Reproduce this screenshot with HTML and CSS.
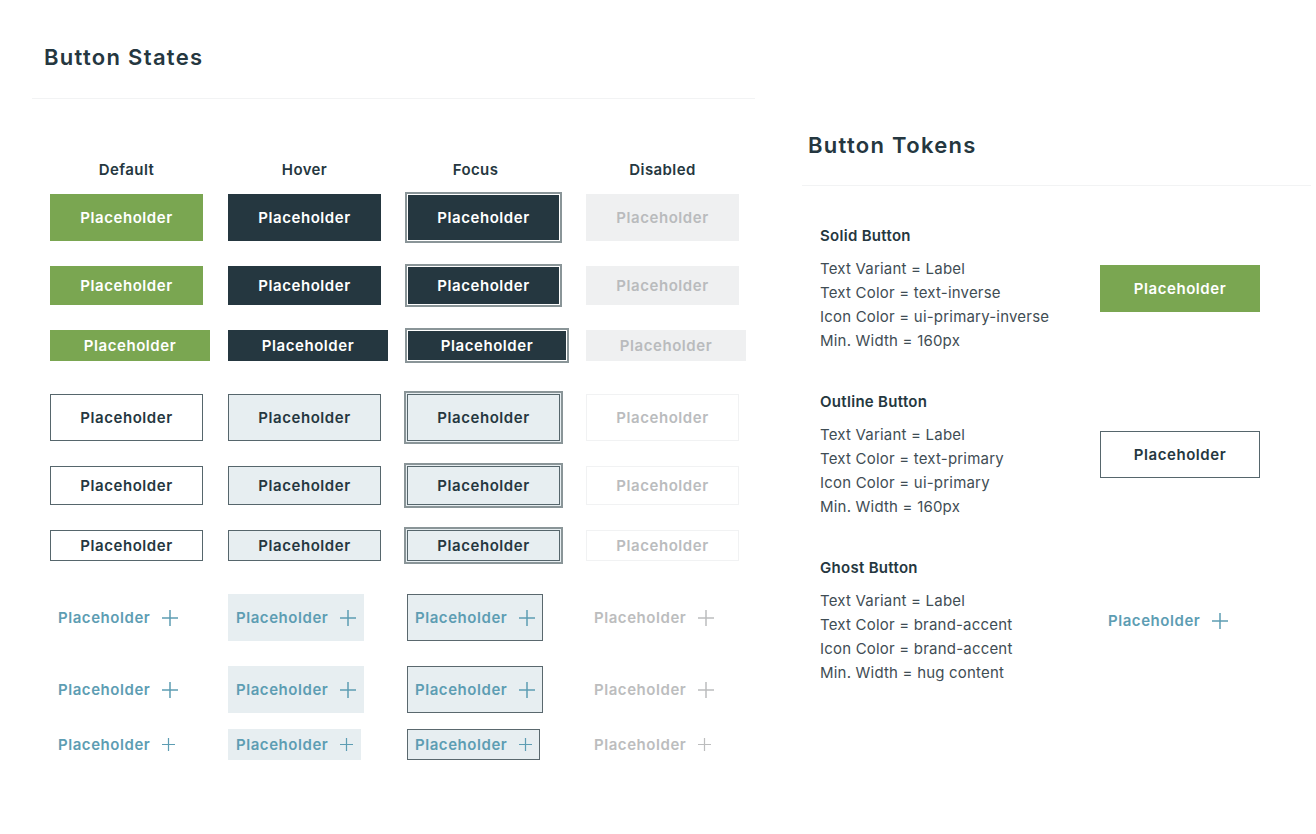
FILE: index.html
```html
<!DOCTYPE html>
<html lang="en">
<head>
    <meta charset="UTF-8">
    <meta name="viewport" content="width=device-width, initial-scale=1.0">
    <title>Buttons</title>
    <link rel="stylesheet" href="styles.css">
</head>
<body>
<div class="page">

    <!-- left: states matrix -->
    <section class="states">
        <div class="section-head">
            <h1>Button States</h1>
        </div>

        <div class="matrix">
            <div class="row heads">
                <div class="col-head">Default</div>
                <div class="col-head">Hover</div>
                <div class="col-head focus-head">Focus</div>
                <div class="col-head">Disabled</div>
            </div>

            <!-- solid -->
            <div class="row first">
                <div><span class="btn solid lg">Placeholder</span></div>
                <div><span class="btn solid hover lg">Placeholder</span></div>
                <div><span class="btn solid focus lg">Placeholder</span></div>
                <div><span class="btn solid disabled lg">Placeholder</span></div>
            </div>
            <div class="row">
                <div><span class="btn solid md">Placeholder</span></div>
                <div><span class="btn solid hover md">Placeholder</span></div>
                <div><span class="btn solid focus md">Placeholder</span></div>
                <div><span class="btn solid disabled md">Placeholder</span></div>
            </div>
            <div class="row">
                <div><span class="btn solid sm wide">Placeholder</span></div>
                <div><span class="btn solid hover sm wide">Placeholder</span></div>
                <div><span class="btn solid focus sm wide">Placeholder</span></div>
                <div><span class="btn solid disabled sm wide">Placeholder</span></div>
            </div>

            <!-- outline -->
            <div class="row group">
                <div><span class="btn outline lg">Placeholder</span></div>
                <div><span class="btn outline hover lg">Placeholder</span></div>
                <div><span class="btn outline focus lg">Placeholder</span></div>
                <div><span class="btn outline disabled lg">Placeholder</span></div>
            </div>
            <div class="row">
                <div><span class="btn outline md">Placeholder</span></div>
                <div><span class="btn outline hover md">Placeholder</span></div>
                <div><span class="btn outline focus md">Placeholder</span></div>
                <div><span class="btn outline disabled md">Placeholder</span></div>
            </div>
            <div class="row">
                <div><span class="btn outline sm">Placeholder</span></div>
                <div><span class="btn outline hover sm">Placeholder</span></div>
                <div><span class="btn outline focus sm">Placeholder</span></div>
                <div><span class="btn outline disabled sm">Placeholder</span></div>
            </div>

            <!-- ghost -->
            <div class="row group">
                <div><span class="btn ghost lg">Placeholder<svg class="plus" viewBox="0 0 16 16"><path d="M8 0v16M0 8h16"/></svg></span></div>
                <div><span class="btn ghost hover lg">Placeholder<svg class="plus" viewBox="0 0 16 16"><path d="M8 0v16M0 8h16"/></svg></span></div>
                <div><span class="btn ghost focus lg">Placeholder<svg class="plus" viewBox="0 0 16 16"><path d="M8 0v16M0 8h16"/></svg></span></div>
                <div><span class="btn ghost disabled lg">Placeholder<svg class="plus" viewBox="0 0 16 16"><path d="M8 0v16M0 8h16"/></svg></span></div>
            </div>
            <div class="row">
                <div><span class="btn ghost md">Placeholder<svg class="plus" viewBox="0 0 16 16"><path d="M8 0v16M0 8h16"/></svg></span></div>
                <div><span class="btn ghost hover lg">Placeholder<svg class="plus" viewBox="0 0 16 16"><path d="M8 0v16M0 8h16"/></svg></span></div>
                <div><span class="btn ghost focus lg">Placeholder<svg class="plus" viewBox="0 0 16 16"><path d="M8 0v16M0 8h16"/></svg></span></div>
                <div><span class="btn ghost disabled md">Placeholder<svg class="plus" viewBox="0 0 16 16"><path d="M8 0v16M0 8h16"/></svg></span></div>
            </div>
            <div class="row last">
                <div><span class="btn ghost sm">Placeholder<svg class="plus small" viewBox="0 0 16 16"><path d="M8 0v16M0 8h16"/></svg></span></div>
                <div><span class="btn ghost hover sm">Placeholder<svg class="plus small" viewBox="0 0 16 16"><path d="M8 0v16M0 8h16"/></svg></span></div>
                <div><span class="btn ghost focus sm">Placeholder<svg class="plus small" viewBox="0 0 16 16"><path d="M8 0v16M0 8h16"/></svg></span></div>
                <div><span class="btn ghost disabled sm">Placeholder<svg class="plus small" viewBox="0 0 16 16"><path d="M8 0v16M0 8h16"/></svg></span></div>
            </div>
        </div>
    </section>

    <!-- right: tokens -->
    <section class="tokens">
        <div class="section-head tokens-head">
            <h1>Button Tokens</h1>
        </div>

        <div class="token-list">
            <div class="token">
                <h2>Solid Button</h2>
                <div class="token-body">
                    <ul class="token-props">
                        <li>Text Variant = Label</li>
                        <li>Text Color = text-inverse</li>
                        <li>Icon Color = ui-primary-inverse</li>
                        <li>Min. Width = 160px</li>
                    </ul>
                    <span class="btn solid lg wide">Placeholder</span>
                </div>
            </div>

            <div class="token">
                <h2>Outline Button</h2>
                <div class="token-body">
                    <ul class="token-props">
                        <li>Text Variant = Label</li>
                        <li>Text Color = text-primary</li>
                        <li>Icon Color = ui-primary</li>
                        <li>Min. Width = 160px</li>
                    </ul>
                    <span class="btn outline lg wide">Placeholder</span>
                </div>
            </div>

            <div class="token">
                <h2>Ghost Button</h2>
                <div class="token-body">
                    <ul class="token-props">
                        <li>Text Variant = Label</li>
                        <li>Text Color = brand-accent</li>
                        <li>Icon Color = brand-accent</li>
                        <li>Min. Width = hug content</li>
                    </ul>
                    <span class="btn ghost lg">Placeholder<svg class="plus" viewBox="0 0 16 16"><path d="M8 0v16M0 8h16"/></svg></span>
                </div>
            </div>
        </div>
    </section>

</div>
</body>
</html>
```

FILE: styles.css
```css
body {
    font-family: Inter, "Noto Sans", sans-serif;
    background-color: #fff;
    color: #253740;
    margin: 0;
}
.page {
    display: flex;
    align-items: flex-start;
}

/* --- section headings --- */
.section-head {
    border-bottom: 1px solid #f2f3f4;
}
h1 {
    margin: 0;
    font-size: 22px;
    line-height: 28px;
    font-weight: 600;
    letter-spacing: 1.3px;
    color: #253740;
}
.states {
    width: 723px;
    margin-left: 32px;
}
.states .section-head {
    padding: 43px 12px 27px;
}
.tokens {
    width: 509px;
    margin-left: 47px;
}
.tokens-head {
    padding: 131px 6px 26px;
}

/* --- states matrix --- */
.matrix {
    margin-left: 18px;
    padding-top: 61px;
}
.row {
    display: grid;
    grid-template-columns: 178px 179px 179px 179px;
    align-items: center;
    margin-top: 25px;
}
.row.heads {
    margin-top: 0;
}
.row.first {
    margin-top: 14px;
}
.row.group {
    margin-top: 33px;
}
.row.last {
    margin-top: 16px;
}
.row > div {
    display: flex;
}
.col-head {
    width: 153px;
    justify-content: center;
    font-size: 15px;
    line-height: 20px;
    font-weight: 600;
    letter-spacing: 0.4px;
}
.focus-head {
    margin-left: -8px;
}

/* --- buttons --- */
.btn {
    display: inline-flex;
    align-items: center;
    justify-content: center;
    box-sizing: border-box;
    width: 153px;
    font-size: 15px;
    font-weight: 600;
    letter-spacing: 0.55px;
    white-space: nowrap;
}
.btn.lg { height: 47px; }
.btn.md { height: 39px; }
.btn.sm { height: 31px; }
.btn.wide { width: 160px; }

.solid {
    background-color: #7aa651;
    color: #fff;
}
.solid.hover,
.solid.focus {
    background-color: #253740;
}
.solid.focus {
    box-shadow: inset 0 0 0 1px #fff, 0 0 0 2px #8a9598;
}
.solid.disabled {
    background-color: #eff0f1;
    color: #b9bbbd;
}

.outline {
    border: 1px solid #56666c;
    background-color: #fff;
    color: #253740;
}
.outline.hover {
    background-color: #e7eef1;
}
.outline.focus {
    background-color: #e7eef1;
    box-shadow: 0 0 0 1px #e7eef1, 0 0 0 3px #8a9598;
}
.outline.disabled {
    border-color: #f1f2f3;
    color: #babcbe;
}

.ghost {
    width: auto;
    padding: 0 8px;
    gap: 12px;
    color: #5d9db3;
}
.ghost.hover {
    background-color: #e7eef1;
}
.ghost.focus {
    background-color: #e7eef1;
    border: 1px solid #5a686e;
    padding: 0 7px;
}
.ghost.disabled {
    color: #bcbdbe;
}
.plus {
    width: 16px;
    height: 16px;
    fill: none;
    stroke: currentColor;
    stroke-width: 1.5;
}
.plus.small {
    width: 13px;
    height: 13px;
}

/* --- tokens --- */
.token-list {
    padding: 40px 0 0 18px;
}
.token + .token {
    margin-top: 39px;
}
h2 {
    margin: 0;
    font-size: 15px;
    line-height: 20px;
    font-weight: 600;
    letter-spacing: 0.3px;
    color: #253740;
}
.token-body {
    display: flex;
    align-items: flex-start;
    margin-top: 11px;
}
.token-props {
    list-style: none;
    margin: 0;
    padding: 0;
    width: 280px;
    font-size: 15px;
    line-height: 24px;
    letter-spacing: 0.2px;
    color: #3f4d54;
}
.token-body .btn {
    margin-top: 8px;
}
```
